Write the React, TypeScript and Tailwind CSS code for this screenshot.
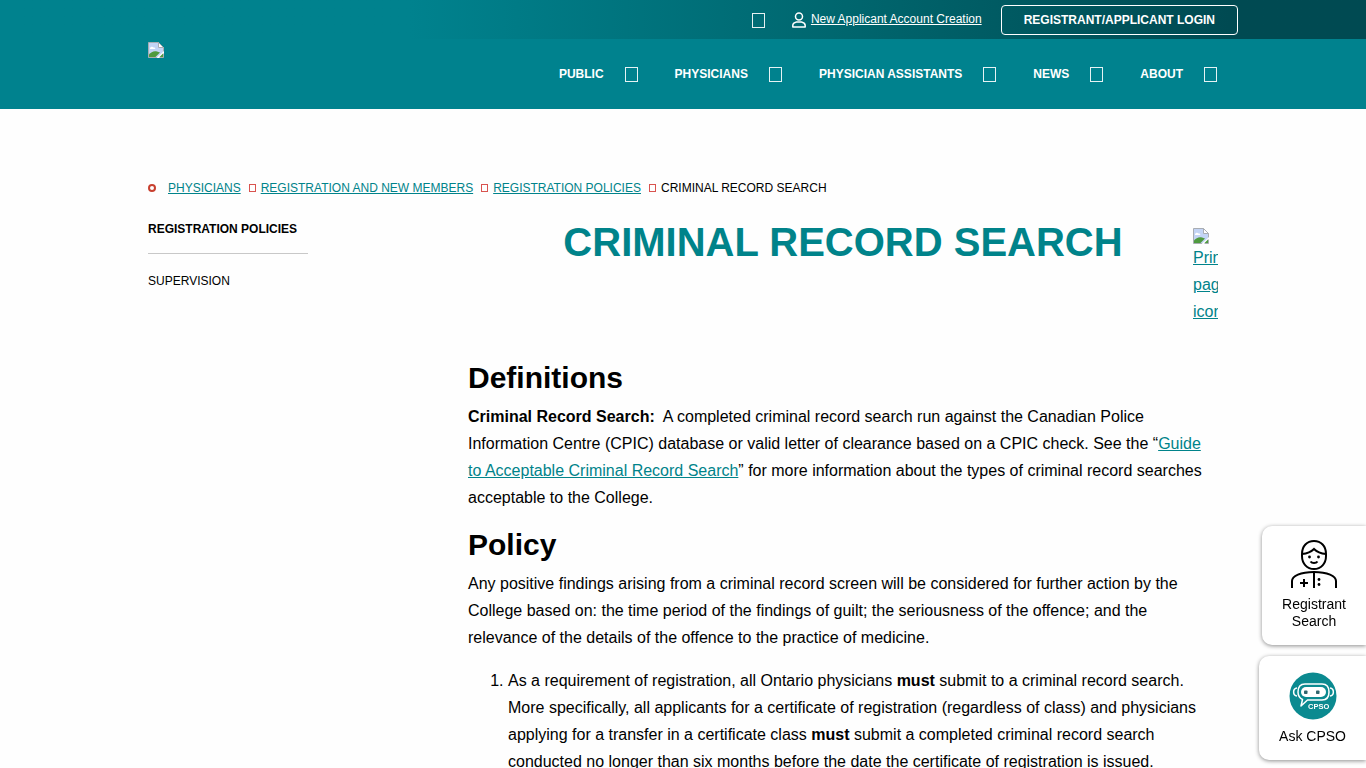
import { Fragment } from "react";

const NAV_ITEMS = ["Public", "Physicians", "Physician Assistants", "News", "About"];

const CRUMBS = ["Physicians", "Registration and New Members", "Registration Policies"];

const Glyph = () => (
  <span className="mx-px mt-px block h-[15px] w-[13px] shrink-0 border border-white/90" />
);

const CrumbGlyph = () => (
  <span className="ml-2 mr-[5px] block h-2 w-[7px] shrink-0 border border-[#d9534f]" />
);

const BrokenImage = () => (
  <svg className="block shrink-0" width="16" height="16" viewBox="0 0 16 16" aria-hidden="true">
    <path d="M.5.5h10l5 5v10H.5z" fill="#c3d4f5" stroke="#a9adb3" />
    <path d="M10.5.5v5h5z" fill="#fff" stroke="#a9adb3" />
    <path d="M2 6.5c0-2 3-2.500 3.500-1 2-.5 2.500 1.500 1 1.500H2z" fill="#fff" />
    <path d="M1 15v-2.500C3 10 6 8.500 9 9.500l3 1L7.500 15z" fill="#4f9a3f" />
    <path d="M8.500 16l7.500-7v2L11 16z" fill="#fff" />
    <path d="M11.500 15l3.500-3.500V15z" fill="#4f9a3f" />
  </svg>
);

const UserIcon = () => (
  <svg
    className="block shrink-0"
    width="14"
    height="16"
    viewBox="0 0 14 16"
    fill="none"
    stroke="white"
    strokeWidth="1.500"
    aria-hidden="true"
  >
    <circle cx="7" cy="4.500" r="3.500" />
    <path d="M.8 15v-1.500C.8 11.500 2.500 10.500 4.500 10h5c2 .5 3.700 1.500 3.700 3.500V15z" strokeLinejoin="round" />
  </svg>
);

const DoctorIcon = () => (
  <svg width="48" height="49" viewBox="0 0 48 49" fill="none" stroke="black" strokeWidth="2" aria-hidden="true">
    <path d="M12 14C12 6 17 1 24 1s12 5 12 13v2c0 7.500-5 13-12 13s-12-5.500-12-13z" />
    <path d="M12 14c5-.5 9-2 12-5 3 3 7 4.500 12 5" />
    <path d="M20.500 21.500c1.500 2 5.500 2 7 0" />
    <circle cx="19.500" cy="17" r="1.400" fill="black" stroke="none" />
    <circle cx="28.500" cy="17" r="1.400" fill="black" stroke="none" />
    <path d="M2 48v-7c0-5 8.500-9 22-9s22 4 22 9v7" />
    <path d="M24 32v16M14 39v8M10 43h8" />
    <circle cx="29" cy="39.500" r="1.400" fill="black" stroke="none" />
    <circle cx="29" cy="44.500" r="1.400" fill="black" stroke="none" />
  </svg>
);

const ChatBotIcon = () => (
  <svg width="48" height="48" viewBox="0 0 48 48" fill="none" aria-hidden="true">
    <circle cx="24" cy="24" r="23.500" fill="#0b8a90" />
    <path
      d="M16 12h17c4.500 0 7 3 7 8s-2.500 8-7 8H18.500L12 34l1.500-6.500C10.500 26 9 23.500 9 20c0-5 2.500-8 7-8z"
      stroke="white"
      strokeWidth="1.500"
      strokeLinejoin="round"
    />
    <path d="M8 16c-4.500.5-4.500 7.500 0 8M41 16c4.500.5 4.500 7.500 0 8" stroke="white" strokeWidth="1.500" />
    <rect x="12" y="15" width="25" height="10" rx="5" fill="white" />
    <rect x="15" y="18.500" width="3.500" height="3.500" rx=".8" fill="#31656d" />
    <rect x="27" y="18.500" width="3.500" height="3.500" rx=".8" fill="#31656d" />
    <text x="19" y="37" fill="white" fontSize="7.500" fontWeight="700" fontFamily="Liberation Sans, Arial, sans-serif">
      CPSO
    </text>
  </svg>
);

const Header = () => (
  <header className="bg-[#00828e] text-xs text-white">
    <div className="bg-linear-to-r from-[#00828e] from-30% via-[#00666e] via-62% to-[#004a52] to-90%">
      <div className="mx-auto flex h-[39px] max-w-[1110px] items-center justify-end pl-5">
        <Glyph />
        <a href="#new" className="ml-[26px] flex items-center gap-[5px]">
          <UserIcon />
          <span className="pb-0.5 underline">New Applicant Account Creation</span>
        </a>
        <a
          href="#login"
          className="ml-[19px] mt-px flex h-[30px] items-center rounded border border-white px-[22px] font-bold uppercase"
        >
          Registrant/Applicant Login
        </a>
      </div>
    </div>
    <div className="mx-auto flex h-[70px] max-w-[1110px] items-center justify-between px-5">
      <a href="#home" aria-label="Home" className="self-start pt-[3px]">
        <BrokenImage />
      </a>
      <nav className="flex items-center gap-9">
        {NAV_ITEMS.map((item) => (
          <a key={item} href="#nav" className="flex items-center gap-5 font-bold uppercase">
            {item}
            <Glyph />
          </a>
        ))}
      </nav>
    </div>
  </header>
);

const Breadcrumbs = () => (
  <nav aria-label="Breadcrumb" className="flex items-center text-xs uppercase leading-4">
    <span className="mr-3 block size-2 shrink-0 rounded-full border-2 border-[#c8402f]" />
    {CRUMBS.map((crumb) => (
      <Fragment key={crumb}>
        <a href="#crumb" className="text-[#00838a] underline">
          {crumb}
        </a>
        <CrumbGlyph />
      </Fragment>
    ))}
    <span>Criminal Record Search</span>
  </nav>
);

const Sidebar = () => (
  <aside className="w-40 shrink-0 pt-px text-xs uppercase leading-4">
    <a href="#policies" className="block border-b border-[#c8c8c8] pb-4 font-bold">
      Registration Policies
    </a>
    <a href="#supervision" className="mt-[19px] block">
      Supervision
    </a>
  </aside>
);

const QuickLinks = () => (
  <div className="fixed bottom-2 right-0 flex flex-col items-end gap-[11px] text-center text-sm leading-[17px]">
    <a
      href="#search"
      className="flex w-[104px] flex-col items-center rounded-l-[10px] bg-white pb-[15px] pt-[14px] shadow-[0_1px_4px_rgba(0,0,0,0.45)]"
    >
      <DoctorIcon />
      <span className="mt-[7px] w-20">Registrant Search</span>
    </a>
    <button
      type="button"
      className="flex w-[107px] flex-col items-center rounded-l-[10px] bg-white pb-[15px] pt-4 shadow-[0_1px_4px_rgba(0,0,0,0.45)]"
    >
      <ChatBotIcon />
      <span className="mt-2">Ask CPSO</span>
    </button>
  </div>
);

const App = () => (
  <div className="min-h-screen bg-[#fefefe] font-['Liberation_Sans',Arial,sans-serif] text-base text-black">
    <Header />
    <div className="mx-auto max-w-[1110px] px-5 pt-[71px]">
      <Breadcrumbs />
      <div className="mt-6 flex justify-between gap-10">
        <Sidebar />
        <main className="w-[750px] leading-[27px]">
          <div className="flex justify-between">
            <h1 className="flex-1 pl-[25px] text-center text-[40px] font-bold uppercase leading-[44px] text-[#00838a]">
              Criminal Record Search
            </h1>
            <a href="#print" className="mt-2 w-[25px] overflow-hidden text-[#00838a] underline">
              <BrokenImage />
              Print page icon
            </a>
          </div>
          <h2 className="mt-9 text-3xl font-bold leading-[33px]">Definitions</h2>
          <p className="mt-[9px]">
            <strong>Criminal Record Search:</strong>&nbsp; A completed criminal record search run against the
            Canadian Police Information Centre (CPIC) database or valid letter of clearance based on a CPIC
            check. See the “
            <a href="#guide" className="text-[#00838a] underline">
              Guide to Acceptable Criminal Record Search
            </a>
            ” for more information about the types of criminal record searches acceptable to the College.
          </p>
          <h2 className="mt-[17px] text-3xl font-bold leading-[33px]">Policy</h2>
          <p className="mt-[9px]">
            Any positive findings arising from a criminal record screen will be considered for further action
            by the College based on: the time period of the findings of guilt; the seriousness of the offence;
            and the relevance of the details of the offence to the practice of medicine.
          </p>
          <ol className="mt-4 list-decimal pl-10">
            <li>
              As a requirement of registration, all Ontario physicians <strong>must</strong> submit to a
              criminal record search. More specifically, all applicants for a certificate of registration
              (regardless of class) and physicians applying for a transfer in a certificate class{" "}
              <strong>must</strong> submit a completed criminal record search conducted no longer than six
              months before the date the certificate of registration is issued.
            </li>
          </ol>
        </main>
      </div>
    </div>
    <QuickLinks />
  </div>
);

export default App;
